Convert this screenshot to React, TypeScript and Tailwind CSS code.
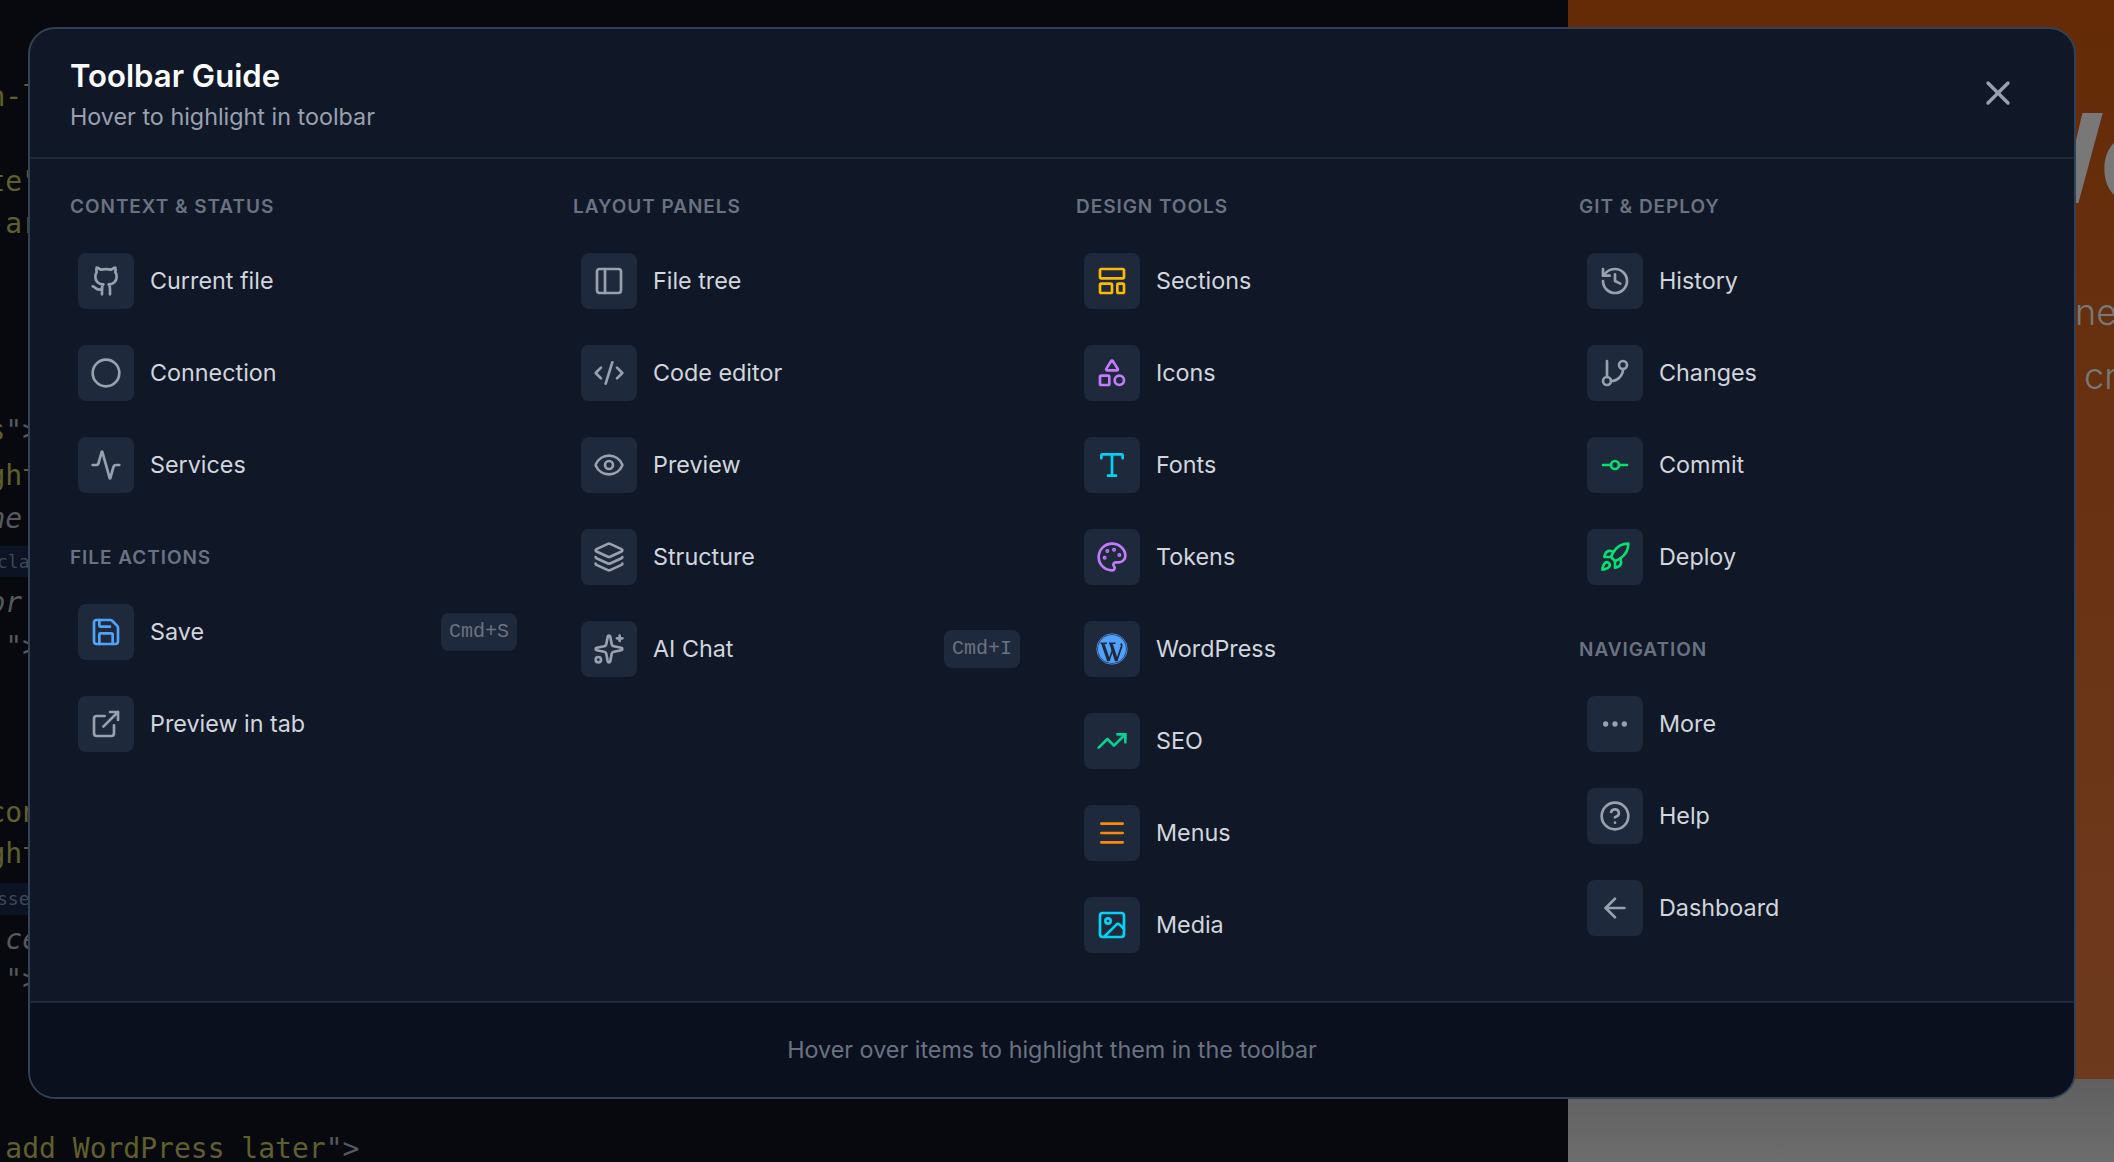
import React from 'react';
import {
  Activity, ArrowLeft, Circle, CircleHelp, CodeXml, Ellipsis, ExternalLink, Eye, GitBranch,
  GitCommitHorizontal, Github, History, Image, Layers, LayoutTemplate, Menu, Palette,
  PanelLeft, Rocket, Save, Shapes, Sparkles, TrendingUp, Type, X,
} from 'lucide-react';

type Item = { icon: React.ElementType; label: string; color?: string; kbd?: string };
type Section = { title: string; items: Item[] };

// blue disc with a dark W and a thin ring, lucide has no such logo
function WordpressLogo({ size = 32 }: { size?: number }) {
  return (
    <svg width={size} height={size} viewBox="0 0 32 32" fill="none">
      <circle cx="16" cy="16" r="15.2" stroke="currentColor" strokeWidth="0.8" />
      <circle cx="16" cy="16" r="14" fill="currentColor" />
      <g stroke="#1e293b" strokeLinejoin="bevel">
        <path d="M6.8 10.5 12.8 28" strokeWidth="3.2" />
        <path d="M12.8 28 16.6 17" strokeWidth="1.6" />
        <path d="M15 10.5 20.6 28" strokeWidth="3.2" />
        <path d="M20.6 28 25.4 14C26 12 25.4 11 24.8 10.5" strokeWidth="1.8" />
        <path d="M4.5 10.2H11M13 10.2H19.5" strokeWidth="1.4" />
      </g>
    </svg>
  );
}

const columns: Section[][] = [
  [
    {
      title: 'Context & Status',
      items: [
        { icon: Github, label: 'Current file' },
        { icon: Circle, label: 'Connection' },
        { icon: Activity, label: 'Services' },
      ],
    },
    {
      title: 'File Actions',
      items: [
        { icon: Save, label: 'Save', color: 'text-blue-400', kbd: 'Cmd+S' },
        { icon: ExternalLink, label: 'Preview in tab' },
      ],
    },
  ],
  [
    {
      title: 'Layout Panels',
      items: [
        { icon: PanelLeft, label: 'File tree' },
        { icon: CodeXml, label: 'Code editor' },
        { icon: Eye, label: 'Preview' },
        { icon: Layers, label: 'Structure' },
        { icon: Sparkles, label: 'AI Chat', kbd: 'Cmd+I' },
      ],
    },
  ],
  [
    {
      title: 'Design Tools',
      items: [
        { icon: LayoutTemplate, label: 'Sections', color: 'text-amber-400' },
        { icon: Shapes, label: 'Icons', color: 'text-purple-400' },
        { icon: Type, label: 'Fonts', color: 'text-cyan-400' },
        { icon: Palette, label: 'Tokens', color: 'text-purple-400' },
        { icon: WordpressLogo, label: 'WordPress', color: 'text-blue-400' },
        { icon: TrendingUp, label: 'SEO', color: 'text-emerald-400' },
        { icon: Menu, label: 'Menus', color: 'text-orange-400' },
        { icon: Image, label: 'Media', color: 'text-cyan-400' },
      ],
    },
  ],
  [
    {
      title: 'Git & Deploy',
      items: [
        { icon: History, label: 'History' },
        { icon: GitBranch, label: 'Changes' },
        { icon: GitCommitHorizontal, label: 'Commit', color: 'text-green-400' },
        { icon: Rocket, label: 'Deploy', color: 'text-green-400' },
      ],
    },
    {
      title: 'Navigation',
      items: [
        { icon: Ellipsis, label: 'More' },
        { icon: CircleHelp, label: 'Help' },
        { icon: ArrowLeft, label: 'Dashboard' },
      ],
    },
  ],
];

// code editor behind the modal, only a few columns peek out
const codeLines: { text?: string; gray?: string; h: string; tag?: boolean; italic?: boolean }[] = [
  { h: 'h-[76px]' },
  { text: 'n-l', h: 'h-[42px]' },
  { h: 'h-[43px]' },
  { text: 'te"', h: 'h-[42px]' },
  { text: ' ar', h: 'h-[42px]' },
  { h: 'h-[165px]' },
  { text: 's', gray: '">', h: 'h-[42px]' },
  { text: 'ght', h: 'h-[48px]' },
  { gray: 'ne', h: 'h-[38px]', italic: true },
  { h: 'h-[8px]' },
  { text: 'cla', h: 'h-[31px]', tag: true },
  { gray: 'or', h: 'h-[52px]', italic: true },
  { gray: ' ">', h: 'h-[36px]' },
  { h: 'h-[127px]' },
  { text: 'con', h: 'h-[42px]' },
  { text: 'ght', h: 'h-[40px]' },
  { h: 'h-[9px]' },
  { text: 'sse', h: 'h-[32px]', tag: true },
  { gray: ' ce', h: 'h-[50px]', italic: true },
  { gray: ' ">', h: 'h-[30px]' },
  { h: 'h-[133px]' },
  { text: ' add WordPress later', gray: '">', h: 'h-[42px]' },
];

function CodeLine({ line }: { line: (typeof codeLines)[number] }) {
  if (line.tag) {
    return (
      <div className={`${line.h} ml-[11.5px] flex items-center bg-[#0c1322] text-[18px] text-[#3f4858]`}>
        <span className="-ml-[3px]">{line.text}</span>
      </div>
    );
  }
  return (
    <div className={`${line.h} flex items-center whitespace-pre ${line.italic ? 'italic' : ''}`}>
      {line.text && <span className="text-[#5f5f2c]">{line.text}</span>}
      {line.gray && <span className="text-[#56585c]">{line.gray}</span>}
    </div>
  );
}

function GuideRow({ item }: { item: Item }) {
  const Icon = item.icon;
  return (
    <div className="flex items-center gap-4 p-2">
      <div className={`flex h-14 w-14 shrink-0 items-center justify-center rounded-lg bg-[#1e293b] ${item.color ?? 'text-gray-400'}`}>
        <Icon size={32} />
      </div>
      <span className="text-[23.33px] text-gray-300">{item.label}</span>
      {item.kbd && (
        <kbd className="ml-auto rounded-lg bg-[#1e293b] px-2 py-[4px] font-[family-name:'Liberation_Mono',monospace] text-[20px] leading-[30px] text-gray-500">
          {item.kbd}
        </kbd>
      )}
    </div>
  );
}

export default function App() {
  return (
    <div className="relative flex h-[1162px] w-[2114px] overflow-hidden bg-[#08090e] font-[family-name:Inter,sans-serif]">
      {/* editor pane */}
      <div className="w-[1568px] shrink-0 overflow-hidden font-[family-name:'DejaVu_Sans_Mono',monospace] text-[28px] leading-none">
        <div className="-ml-[11.5px]">
          {codeLines.map((line, i) => (
            <CodeLine key={i} line={line} />
          ))}
        </div>
      </div>

      {/* preview pane */}
      <div className="flex flex-1 flex-col">
        <div className="h-[1079px] overflow-hidden bg-gradient-to-b from-[#642b06] to-[#6e3a1e] pl-[409px] text-[#787878] whitespace-nowrap">
          <div className="mt-[96px] h-[184px] text-[124px] font-bold leading-[124px]">Wo</div>
          <div className="ml-[98px] h-[64px] text-[36px] font-light leading-[64px]">ne</div>
          <div className="ml-[107px] text-[36px] font-light leading-[64px]">cr</div>
        </div>
        <div className="flex-1 bg-gradient-to-b from-[#5f5f5f] to-[#6d6d6d]" />
      </div>

      {/* toolbar guide modal */}
      <div className="absolute left-[28px] top-[27px] flex h-[1072px] w-[2048px] flex-col overflow-hidden rounded-[27px] border-2 border-[#334155] bg-[#101828]">
        <div className="flex h-[130px] shrink-0 items-center justify-between border-b-2 border-[#1e2939] px-10">
          <div className="pt-1">
            <h2 className="mb-1 text-[31.1px] font-semibold leading-[40px] text-white">Toolbar Guide</h2>
            <p className="text-[23.33px] leading-[34px] text-gray-400">Hover to highlight in toolbar</p>
          </div>
          <button className="p-4 text-gray-400">
            <X size={40} />
          </button>
        </div>

        <div className="flex flex-1 gap-12 px-10 pt-9">
          {columns.map((sections, c) => (
            <div key={c} className="flex w-[455px] flex-col gap-[45px]">
              {sections.map((section) => (
                <div key={section.title}>
                  <h3 className="mb-[26px] text-[19px] font-semibold uppercase leading-6 tracking-wider text-gray-500">
                    {section.title}
                  </h3>
                  <div className="flex flex-col gap-5">
                    {section.items.map((item) => (
                      <GuideRow key={item.label} item={item} />
                    ))}
                  </div>
                </div>
              ))}
            </div>
          ))}
        </div>

        <div className="flex h-[96px] shrink-0 items-center justify-center border-t-2 border-[#1e2939] bg-[#0a101e] text-[23.33px] text-gray-500">
          Hover over items to highlight them in the toolbar
        </div>
      </div>
    </div>
  );
}
